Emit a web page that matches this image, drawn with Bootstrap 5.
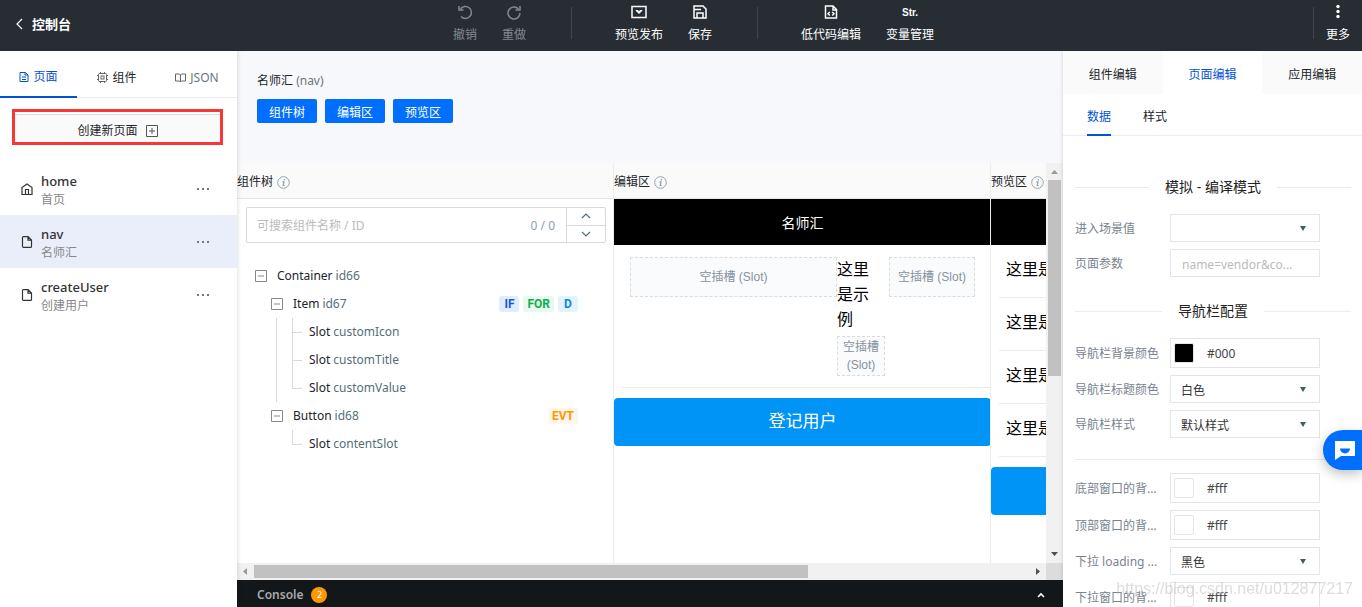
<!DOCTYPE html>
<html lang="zh-CN">
<head>
<meta charset="utf-8">
<meta name="viewport" content="width=device-width, initial-scale=1">
<title>控制台</title>
<link href="https://cdn.jsdelivr.net/npm/bootstrap@5.3.0/dist/css/bootstrap.min.css" rel="stylesheet">
<script src="https://cdn.jsdelivr.net/npm/bootstrap@5.3.0/dist/js/bootstrap.bundle.min.js" defer></script>
<style>
:root{--brand:#0052d9;--ui:"Noto Sans","Noto Sans CJK SC",sans-serif}
body{font-family:var(--ui);font-size:12px;line-height:18px;color:#212529}
button,input,select{font-family:inherit;font-size:inherit}
a{text-decoration:none;color:inherit}
button{background:none;border:0;padding:0;color:inherit}
svg{display:block;flex:none}
/* top bar */
.topbar{height:51px;background:#282d34;color:#fff;z-index:2}
.back{font-size:13px;font-weight:700}
.tools{gap:25px;padding-left:3px}
.tool{display:flex;flex-direction:column;align-items:center;gap:6px;white-space:nowrap}
.tool:disabled{color:#85898e}
.tool svg,.glyph{height:16px}
.glyph{font:bold 10px/18px "Liberation Sans",sans-serif}
.rule{width:1px;height:32px;background:#43474d;margin-top:7px}
.tools .rule{margin-left:20px;margin-right:18px}
/* left side */
.sidebar{width:237px;background:#fff;box-shadow:1px 0 4px #0000001f;z-index:1}
.side-tabs{height:47px;border-bottom:1px solid #ececec}
.side-tabs a{height:47px;padding-top:6px;flex:1}
.side-tabs a.on{flex:none;width:77px;color:var(--brand);border-bottom:2px solid var(--brand)}
.side-tabs svg{color:#666}
.side-tabs .on svg{color:var(--brand)}
.create{margin:11px 14px 17px 12px;height:36px;border:3px solid #f93636;padding-top:2px}
.create button{background:#fafafa;border-top:1px solid #d9d9d9;padding-top:4px}
.page-row{height:53px;padding:0 28px 0 21px;color:#333}
.page-row.on{background:#eaeefb}
.page-row b{font-size:13px;font-weight:500;line-height:20px;padding-top:2px}
.page-row small{font-size:12px;line-height:18px;color:#888}
/* middle */
.work{background:#f7f8fb}
.intro{height:112px;padding:21px 20px}
.pill{height:24px;width:60px;background:#006fff;color:#fff;border-radius:2px;padding-top:4px}
.pills{padding-top:9px}
.pane{width:377px;flex:none;background:#fff;box-shadow:-1px 0 #ececec}
.pane-head{height:36px;background:#fafafa;border-bottom:1px solid #e4e4e4;white-space:nowrap;padding-top:3px}
.pane-head svg{color:#90a4ae}
.find{height:36px;margin:8px 8px 0 9px;border:1px solid #d9d9d9;border-radius:2px}
.find input{border:0;outline:0;min-width:0;background:none;padding:2px 10px 0}
.find input::placeholder{color:#bbb;opacity:1}
.hits{color:#90a0ac;padding:2px 11px 0}
.find .step{width:39px;border-left:1px solid #d9d9d9;color:#546e7a}
.find .step button+button{border-top:1px solid #d9d9d9}
.tree,.tree ul{list-style:none;margin:0;padding:0}
.tree{padding:19px 36px 0 18px}
.node{height:28px;display:flex;align-items:center;gap:3px}
.node i{font-style:normal;color:#546e7a}
.node svg{color:#888;margin-right:7px}
.tree .kids{padding-left:16px}
.tree .leaves{margin-left:5px;border-left:1px solid #d9d9d9;padding-left:15px}
.tree .leaves.bare{border-color:transparent}
.leaves .node{padding-left:17px;background:linear-gradient(#d9d9d9,#d9d9d9) 0 14px/10px 1px no-repeat,linear-gradient(#d9d9d9,#d9d9d9) 0 0/1px 100% no-repeat}
.leaves .node:last-child{background-size:10px 1px,1px 14px}
.flags{display:flex;gap:4px}
.flag{font:700 12px/16px Roboto,sans-serif;min-width:20px;padding:0 4px;border-radius:3px;text-align:center}
.f-if{color:#1459d9;background:#e0edfd}.f-for{color:#0ab050;background:#eaf8ef}
.f-d{color:#0a8ad6;background:#e3f3fb}.f-evt{color:#ff9800;background:#fff5e8}
.phone-bar{height:46px;background:#000;color:#fff;font-size:14px;padding-top:2px}
.demo{padding:12px 16px 11px}
.demo-mid{width:48px;flex:none}
.demo-mid .sample{width:40px}
.demo-end{width:86px;flex:none;margin-left:4px}
.divide{margin-left:8px;border-bottom:1px solid #ececec}
.slot{border:1px dashed #d9dcdf;background:#fafbfd;color:#8792a0;min-height:40px;display:flex;align-items:center;justify-content:center;text-align:center;font-family:"Liberation Sans","Noto Sans CJK SC",sans-serif}
.sample{font-size:16px;line-height:25px;color:#000}
.cell{height:53px;padding:12px 7px 0;border-bottom:1px solid #ececec;margin-left:8px;white-space:nowrap}
.submit{height:48px;border-radius:4px;background:#0094f7;color:#fff;font-size:17px;width:100%;padding-bottom:2px;margin-top:10px}
.bar-v,.bar-h{background:#f1f1f1}
.bar-v{width:17px;padding:0 2px}.bar-h{height:17px}
.bar-v .arrow{height:17px;width:13px}.bar-h .arrow{width:17px;height:17px}
.thumb{background:#c1c1c1}
.bar-v .thumb{height:49%}.bar-h .thumb{width:68.5%;margin:2px 0}
.corner{width:17px;background:#dcdcdc}
.console{height:27px;background:#13171a;color:#aaa;padding:3px 16px 0 20px}
.count{width:16px;height:16px;border-radius:50%;background:#ff9800;color:#fff;font-size:9px;line-height:16px;text-align:center}
/* right side */
.props{width:299px;background:#fff;box-shadow:-1px 0 3px #0000001a;z-index:1}
.top-tabs a{height:43px;background:#fafafa;padding-top:5px}
.top-tabs a.on{background:#fff;color:var(--brand)}
.sub-tabs{height:42px;border-bottom:1px solid #ececec;padding-left:24px;gap:32px}
.sub-tabs a{height:42px;line-height:46px}
.sub-tabs a.on{color:var(--brand);border-bottom:2px solid var(--brand)}
.legend-line{font-size:14px;line-height:20px;color:#222;margin:17px 11px 10px 0}
.legend-line::before,.legend-line::after{content:"";flex:1;height:1px;background:#ececec}
.legend-line.lead-in{margin-top:41px}
.legend-line.plain{margin:14px 11px 6px 0}
.form{padding-left:12px;gap:7px}
.field{display:flex;align-items:center}
.field label{width:95px;white-space:nowrap;color:#78838f;padding-top:2px}
.box{width:150px;height:28px;border:1px solid #e3e5e8;border-radius:0;background:#fff;color:#333;padding:2px 11px 0;outline:0}
select.box{appearance:none;background:#fff url("data:image/svg+xml,%3Csvg xmlns='http://www.w3.org/2000/svg' viewBox='0 0 6 5'%3E%3Cpath d='M0 0h6L3 5z' fill='%23455a64'/%3E%3C/svg%3E") right 13px center/6px 5px no-repeat;padding-top:4px;padding-left:10px}
.box::placeholder{color:#bbb;opacity:1}
.color-box{height:30px;padding:0 3px;display:flex;align-items:center;gap:13px}
.color-box input{border:0;outline:0;width:100px;padding:2px 0 0;color:#444}
.swatch{width:20px;height:20px;border:1px solid #e3e5e8;border-radius:2px}
.swatch.dark{background:#000}
.chat{position:fixed;right:0;top:430px;width:39px;height:40px;border-radius:20px 0 0 20px;background:#006fff;box-shadow:0 4px 12px #00000040;z-index:5;padding-left:12px}
.stamp{position:fixed;right:9px;bottom:8px;font:16px/20px "Liberation Sans",sans-serif;color:#bbbbbb80;z-index:4;pointer-events:none}
</style>
</head>
<body class="vh-100 overflow-hidden d-flex flex-column">
<header class="topbar d-flex flex-shrink-0 position-relative">
  <a href="#" class="back d-flex align-items-center ps-3 pb-1"><svg width="16" height="12" viewBox="0 0 16 12" fill="none" stroke="currentColor" stroke-width="1.2"><path d="M6 1 1 6l5 5"/></svg>控制台</a>
  <div class="d-flex mx-auto tools">
    <button class="tool pt-1" disabled><svg width="16" height="16" viewBox="0 0 16 16" fill="none" stroke="currentColor" stroke-width="1.5"><path d="M2 2v4h4.500"/><path d="M3.500 5A6 6 0 1 1 4 12.500"/></svg>撤销</button>
    <button class="tool pt-1" disabled><svg width="16" height="16" viewBox="0 0 16 16" fill="none" stroke="currentColor" stroke-width="1.5"><path d="M14 2v4H9.500"/><path d="M12.500 5A6 6 0 1 0 14 9"/></svg>重做</button>
    <span class="rule"></span>
    <button class="tool pt-1"><svg width="16" height="16" viewBox="0 0 16 16" fill="none" stroke="currentColor" stroke-width="1.500"><path d="M1 2.500h14v11H1z"/><path d="M5 6.500h2L8 8l1-1.500h2L8 9.500z" fill="currentColor" stroke-width="1"/></svg>预览发布</button>
    <button class="tool pt-1"><svg width="16" height="16" viewBox="0 0 16 16" fill="none" stroke="currentColor" stroke-width="1.500"><path d="M2 2h9l3 3v9H2zM5 14V9h6v5M2 5.500h7"/></svg>保存</button>
    <span class="rule"></span>
    <button class="tool pt-1"><svg width="16" height="16" viewBox="0 0 16 16" fill="none" stroke="currentColor" stroke-width="1.500"><path d="M2.500 2H10l3.500 3.500V14h-11zM10 2v4h3M6.800 8 5 9.800l1.800 1.700M9.200 8 11 9.800l-1.800 1.700"/></svg>低代码编辑</button>
    <button class="tool pt-1"><span class="glyph">Str.</span>变量管理</button>
  </div>
  <span class="rule"></span>
  <button class="tool pt-1 px-1 mx-2"><svg width="16" height="16" viewBox="0 0 16 16" fill="currentColor"><circle cx="8" cy="2.500" r="1.700"/><circle cx="8" cy="7.500" r="1.700"/><circle cx="8" cy="12.500" r="1.700"/></svg>更多</button>
</header>

<div class="d-flex flex-grow-1 overflow-hidden">
  <aside class="sidebar flex-shrink-0">
    <nav class="side-tabs d-flex">
      <a href="#" class="on d-flex align-items-center justify-content-center gap-1"><svg width="10" height="10" viewBox="0 0 10 10" fill="none" stroke="currentColor"><path d="M1 .5h5.500L9 3v6.500H1zM6 .5V3h3M3 5h4M3 7.500h4"/></svg>页面</a>
      <a href="#" class="d-flex align-items-center justify-content-center gap-1"><svg width="11" height="11" viewBox="0 0 11 11" fill="none" stroke="currentColor"><rect x="1.500" y="1.500" width="8" height="8" rx="1"/><rect x="4" y="4" width="3" height="3"/><path d="M3.500 0v1.500M7.500 0v1.500M3.500 9.500V11M7.500 9.500V11M0 3.500h1.500M0 7.500h1.500M9.500 3.500H11M9.500 7.500H11"/></svg>组件</a>
      <a href="#" class="d-flex align-items-center justify-content-center gap-1 text-secondary"><svg width="11" height="10" viewBox="0 0 11 10" fill="none" stroke="currentColor"><path d="M.5 1h4l1 1 1-1h4v7h-4l-1 1-1-1h-4zM5.500 2v7"/></svg>JSON</a>
    </nav>
    <div class="create d-flex"><button class="flex-fill d-flex align-items-center justify-content-center gap-2">创建新页面 <svg width="12" height="12" viewBox="0 0 12 12" fill="none" stroke="#555"><path d="M.5.5h11v11H.5zM6 3v6M3 6h6"/></svg></button></div>
    <a href="#" class="page-row d-flex align-items-center"><svg width="12" height="12" viewBox="0 0 12 12" fill="none" stroke="currentColor" stroke-width="1.200"><path d="M1 4.500 6 1l5 3.500v7H1zM4.500 11V6.500h3V11"/></svg><span class="d-flex flex-column ps-2 flex-fill"><b>home</b><small>首页</small></span><svg width="12" height="4" viewBox="0 0 12 4" fill="#777"><path d="M0 1h2v2H0zM5 1h2v2H5zM10 1h2v2h-2z"/></svg></a>
    <a href="#" class="page-row on d-flex align-items-center"><svg width="12" height="12" viewBox="0 0 12 12" fill="none" stroke="currentColor" stroke-width="1.200"><path d="M2.500.6H7l3.500 3.500v6.300a1 1 0 0 1-1 1h-7a1 1 0 0 1-1-1V1.600a1 1 0 0 1 1-1zM7 .6v3.500h3.500"/></svg><span class="d-flex flex-column ps-2 flex-fill"><b>nav</b><small>名师汇</small></span><svg width="12" height="4" viewBox="0 0 12 4" fill="#777"><path d="M0 1h2v2H0zM5 1h2v2H5zM10 1h2v2h-2z"/></svg></a>
    <a href="#" class="page-row d-flex align-items-center"><svg width="12" height="12" viewBox="0 0 12 12" fill="none" stroke="currentColor" stroke-width="1.200"><path d="M2.500.6H7l3.500 3.500v6.300a1 1 0 0 1-1 1h-7a1 1 0 0 1-1-1V1.600a1 1 0 0 1 1-1zM7 .6v3.500h3.500"/></svg><span class="d-flex flex-column ps-2 flex-fill"><b>createUser</b><small>创建用户</small></span><svg width="12" height="4" viewBox="0 0 12 4" fill="#777"><path d="M0 1h2v2H0zM5 1h2v2H5zM10 1h2v2h-2z"/></svg></a>
  </aside>

  <main class="work flex-fill d-flex flex-column overflow-hidden">
    <section class="intro flex-shrink-0">
      <div>名师汇 <span class="text-secondary">(nav)</span></div>
      <div class="d-flex gap-2 pills"><button class="pill">组件树</button><button class="pill">编辑区</button><button class="pill">预览区</button></div>
    </section>
    <div class="d-flex flex-fill overflow-hidden">
      <div class="d-flex flex-fill overflow-hidden">
        <section class="pane">
          <div class="pane-head d-flex align-items-center gap-1">组件树 <svg width="13" height="13" viewBox="0 0 13 13" fill="none" stroke="currentColor"><circle cx="6.500" cy="6.500" r="5.800"/><path d="M7.300 3v1.500M5.300 5.800H7L6.200 9.500h1.600" stroke-width="1.200"/></svg></div>
          <div class="find d-flex">
            <input class="flex-fill" type="text" aria-label="搜索组件" placeholder="可搜索组件名称 / ID">
            <span class="hits align-self-center">0 / 0</span>
            <span class="step d-flex flex-column">
              <button class="flex-fill d-flex align-items-center justify-content-center" aria-label="上一个"><svg width="10" height="6" viewBox="0 0 10 6" fill="none" stroke="currentColor" stroke-width="1.200"><path d="m1 5 4-4 4 4"/></svg></button>
              <button class="flex-fill d-flex align-items-center justify-content-center" aria-label="下一个"><svg width="10" height="6" viewBox="0 0 10 6" fill="none" stroke="currentColor" stroke-width="1.200"><path d="m1 1 4 4 4-4"/></svg></button>
            </span>
          </div>
          <ul class="tree">
            <li><div class="node"><svg width="12" height="12" viewBox="0 0 12 12" fill="none" stroke="currentColor"><path d="M.5.5h11v11H.5zM3 6h6"/></svg>Container <i>id66</i></div>
              <ul class="kids">
                <li><div class="node"><svg width="12" height="12" viewBox="0 0 12 12" fill="none" stroke="currentColor"><path d="M.5.5h11v11H.5zM3 6h6"/></svg>Item <i class="me-auto">id67</i><span class="flags"><span class="flag f-if">IF</span><span class="flag f-for">FOR</span><span class="flag f-d">D</span></span></div>
                  <ul class="leaves"><li class="node">Slot <i>customIcon</i></li><li class="node">Slot <i>customTitle</i></li><li class="node">Slot <i>customValue</i></li></ul></li>
                <li><div class="node"><svg width="12" height="12" viewBox="0 0 12 12" fill="none" stroke="currentColor"><path d="M.5.5h11v11H.5zM3 6h6"/></svg>Button <i class="me-auto">id68</i><span class="flags"><span class="flag f-evt">EVT</span></span></div>
                  <ul class="leaves bare"><li class="node">Slot <i>contentSlot</i></li></ul></li>
              </ul></li>
          </ul>
        </section>
        <section class="pane">
          <div class="pane-head d-flex align-items-center gap-1">编辑区 <svg width="13" height="13" viewBox="0 0 13 13" fill="none" stroke="currentColor"><circle cx="6.500" cy="6.500" r="5.800"/><path d="M7.300 3v1.500M5.300 5.800H7L6.200 9.500h1.600" stroke-width="1.200"/></svg></div>
          <div class="phone-bar d-flex align-items-center justify-content-center">名师汇</div>
          <div class="demo d-flex align-items-start">
            <div class="slot flex-fill">空插槽 (Slot)</div>
            <div class="demo-mid"><div class="sample">这里是示例</div><div class="slot mt-1">空插槽 (Slot)</div></div>
            <div class="slot demo-end">空插槽 (Slot)</div>
          </div>
          <div class="divide"></div>
          <button class="submit">登记用户</button>
        </section>
        <section class="pane">
          <div class="pane-head d-flex align-items-center gap-1">预览区 <svg width="13" height="13" viewBox="0 0 13 13" fill="none" stroke="currentColor"><circle cx="6.500" cy="6.500" r="5.800"/><path d="M7.300 3v1.500M5.300 5.800H7L6.200 9.500h1.600" stroke-width="1.200"/></svg></div>
          <div class="phone-bar"></div>
          <div class="cell sample">这里是示例</div><div class="cell sample">这里是示例</div><div class="cell sample">这里是示例</div><div class="cell sample">这里是示例</div>
          <button class="submit" aria-label="登记用户"></button>
        </section>
      </div>
      <div class="bar-v flex-shrink-0"><svg class="arrow" viewBox="0 0 13 17"><path d="M3 11h7L6.500 7z" fill="#999"/></svg><div class="thumb"></div><svg class="arrow bar-end" viewBox="0 0 13 17"><path d="M3 6h7l-3.500 4z" fill="#505050"/></svg></div>
    </div>
    <div class="d-flex flex-shrink-0"><div class="bar-h flex-fill d-flex"><svg class="arrow" viewBox="0 0 17 17"><path d="M10 5v7L6 8.500z" fill="#999"/></svg><div class="thumb"></div><svg class="arrow ms-auto" viewBox="0 0 17 17"><path d="M7 5v7l4-3.500z" fill="#505050"/></svg></div><div class="corner"></div></div>
    <footer class="console d-flex align-items-center flex-shrink-0"><span class="fw-semibold">Console</span><span class="count ms-2">2</span><button class="ms-auto" aria-label="展开"><svg width="12" height="8" viewBox="0 0 12 8" fill="none" stroke="#fff" stroke-width="1.600"><path d="m3 6 3-3 3 3"/></svg></button></footer>
  </main>

  <aside class="props flex-shrink-0 overflow-hidden">
    <nav class="top-tabs d-flex"><a href="#" class="flex-fill d-flex align-items-center justify-content-center">组件编辑</a><a href="#" class="on flex-fill d-flex align-items-center justify-content-center">页面编辑</a><a href="#" class="flex-fill d-flex align-items-center justify-content-center">应用编辑</a></nav>
    <nav class="sub-tabs d-flex"><a href="#" class="on">数据</a><a href="#">样式</a></nav>
    <form class="form d-flex flex-column">
      <div class="legend-line lead-in d-flex align-items-center gap-3">模拟 - 编译模式</div>
      <div class="field"><label for="scene">进入场景值</label><select id="scene" class="box"><option></option></select></div>
      <div class="field"><label for="args">页面参数</label><input id="args" class="box" type="text" placeholder="name=vendor&amp;co..."></div>
      <div class="legend-line d-flex align-items-center gap-3">导航栏配置</div>
      <div class="field"><label for="navbg">导航栏背景颜色</label><div class="box color-box"><span class="swatch dark"></span><input id="navbg" type="text" value="#000"></div></div>
      <div class="field"><label for="navfg">导航栏标题颜色</label><select id="navfg" class="box"><option>白色</option></select></div>
      <div class="field"><label for="navst">导航栏样式</label><select id="navst" class="box"><option>默认样式</option></select></div>
      <div class="legend-line plain d-flex"></div>
      <div class="field"><label for="bot">底部窗口的背...</label><div class="box color-box"><span class="swatch"></span><input id="bot" type="text" value="#fff"></div></div>
      <div class="field"><label for="top">顶部窗口的背...</label><div class="box color-box"><span class="swatch"></span><input id="top" type="text" value="#fff"></div></div>
      <div class="field"><label for="load">下拉 loading ...</label><select id="load" class="box"><option>黑色</option></select></div>
      <div class="field"><label for="pull">下拉窗口的背...</label><div class="box color-box"><span class="swatch"></span><input id="pull" type="text" value="#fff"></div></div>
    </form>
  </aside>
</div>
<button class="chat" aria-label="客服"><svg width="20" height="20" viewBox="0 0 20 20"><path d="M0 1h20v15H6l-6 4z" fill="#fff"/><path d="M5 8.500h10a5 5 0 0 1-10 0z" fill="#006fff"/></svg></button>
<div class="stamp">https://blog.csdn.net/u012877217</div>
<style>
.bar-v{display:flex;flex-direction:column}
.bar-end{margin-top:auto}
</style>
</body>
</html>
